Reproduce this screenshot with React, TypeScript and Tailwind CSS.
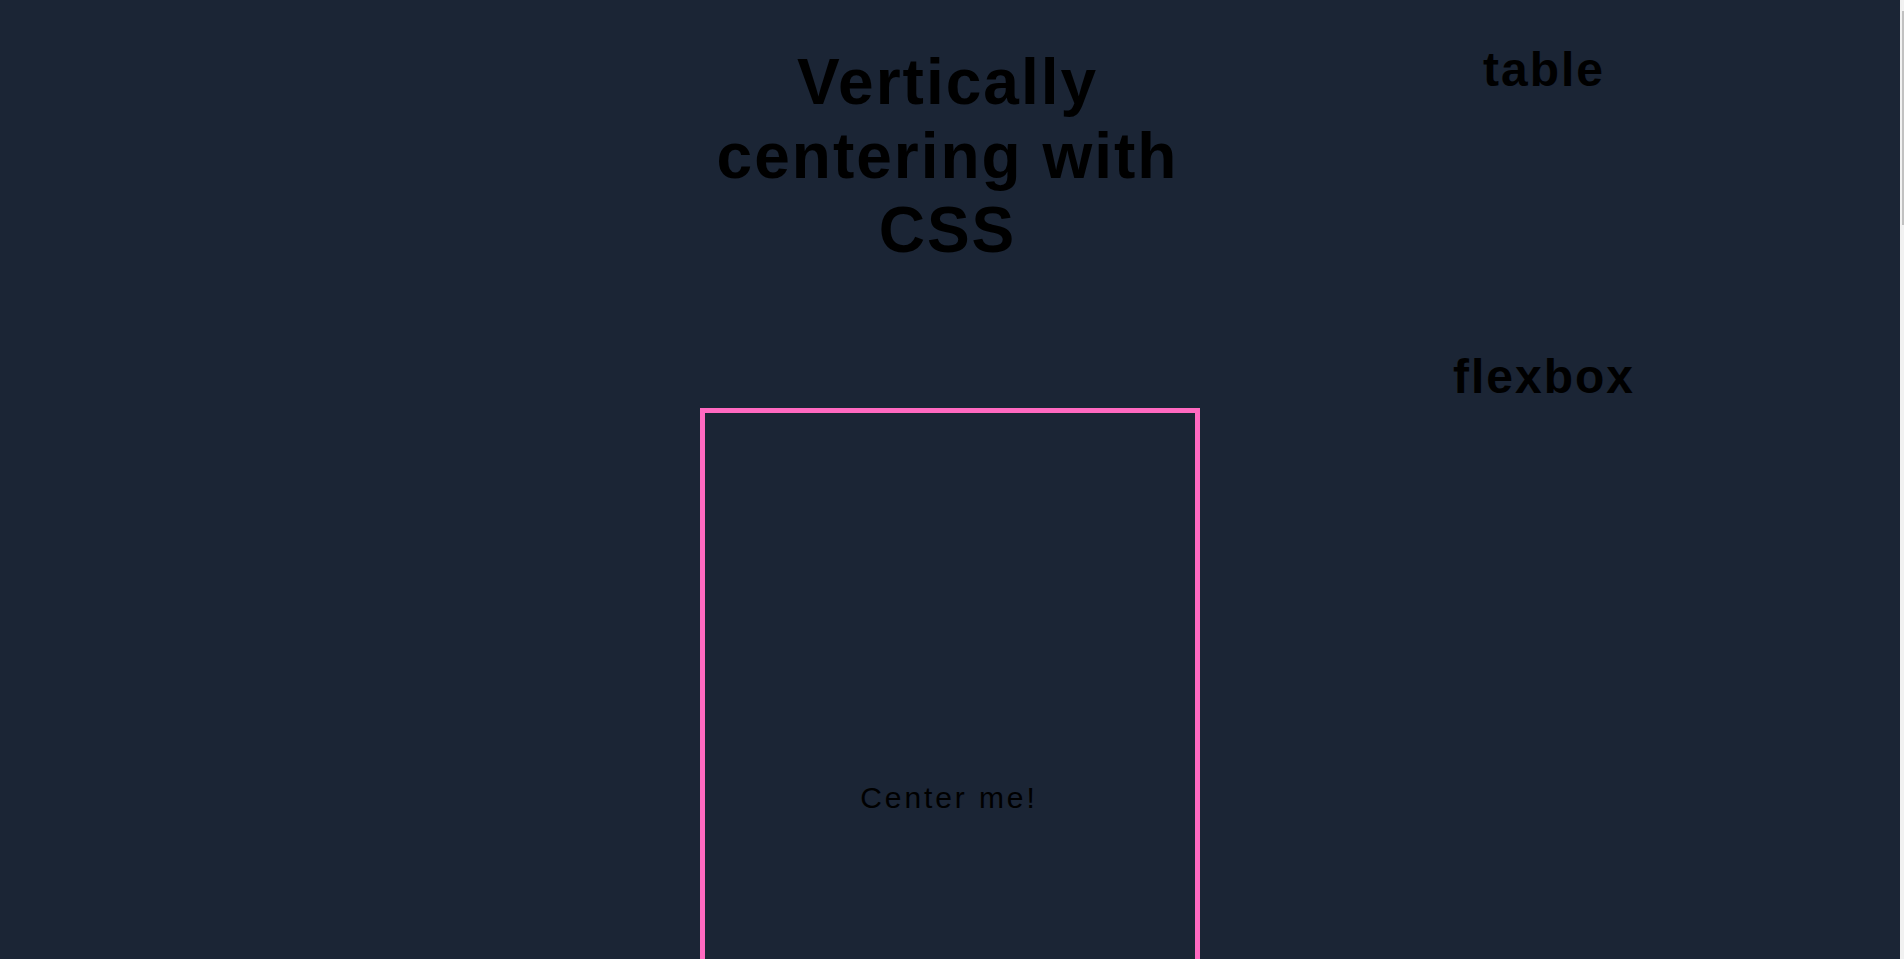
export default function App() {
  return (
    <div className="relative h-screen overflow-hidden bg-[#1b2535] font-['Liberation_Sans',Arial,sans-serif] text-black">
      <div className="grid grid-cols-[700px_500px_1fr]">
        <div />
        <div className="flex flex-col items-center">
          <h1 className="mr-[5px] mt-[45px] text-center text-[64px] font-bold leading-[normal] tracking-[2px]">
            Vertically centering with CSS
          </h1>
          <div className="mt-[141px] flex h-[780px] w-[500px] items-center justify-center border-[5px] border-solid border-[#ff69c0]">
            <p className="mr-[2px] text-[30px] leading-[normal] tracking-[2.9px]">Center me!</p>
          </div>
        </div>
        <div className="flex flex-col items-center pr-[16px]">
          <h2 className="mt-[42px] text-[48px] font-bold leading-[normal] tracking-[2px]">table</h2>
          <h2 className="mt-[252px] text-[48px] font-bold leading-[normal] tracking-[2px]">flexbox</h2>
        </div>
      </div>
      <div className="absolute right-0 top-0 h-full w-[4px] bg-[#f1f1f1]">
        <div className="ml-[2px] mt-[11px] h-[214px] w-[2px] bg-[#c1c1c1]" />
      </div>
    </div>
  );
}
